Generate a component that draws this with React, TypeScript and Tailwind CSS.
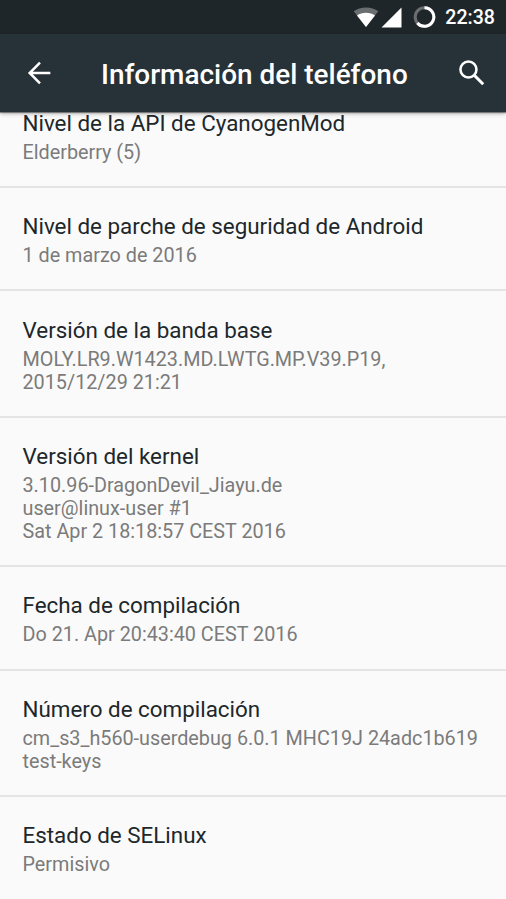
interface InfoItem {
  title: string;
  summary: string[];
}

const items: InfoItem[] = [
  { title: "Nivel de la API de CyanogenMod", summary: ["Elderberry (5)"] },
  {
    title: "Nivel de parche de seguridad de Android",
    summary: ["1 de marzo de 2016"],
  },
  {
    title: "Versión de la banda base",
    summary: ["MOLY.LR9.W1423.MD.LWTG.MP.V39.P19,", "2015/12/29 21:21"],
  },
  {
    title: "Versión del kernel",
    summary: [
      "3.10.96-DragonDevil_Jiayu.de",
      "user@linux-user #1",
      "Sat Apr 2 18:18:57 CEST 2016",
    ],
  },
  {
    title: "Fecha de compilación",
    summary: ["Do 21. Apr 20:43:40 CEST 2016"],
  },
  {
    title: "Número de compilación",
    summary: ["cm_s3_h560-userdebug 6.0.1 MHC19J 24adc1b619", "test-keys"],
  },
  { title: "Estado de SELinux", summary: ["Permisivo"] },
];

function StatusBar() {
  return (
    <div className="flex h-[34px] shrink-0 items-center justify-end bg-[#1f262a] pr-[11px] text-white">
      <svg width="26" height="22" viewBox="0 0 26 22" aria-hidden="true">
        <path d="M13 21 0.7 5.3C4 2.7 8.3 1.4 13 1.4S22 2.7 25.3 5.3Z" fill="#6a6e70" />
        <path d="M13 21 4 9.5C6.5 7.7 9.6 6.7 13 6.7s6.5 1 9 2.8Z" fill="#fff" />
      </svg>
      <svg className="ml-[2px]" width="21" height="22" viewBox="0 0 21 22" aria-hidden="true">
        <path d="M20.5 1.5V21.5H0.5Z" fill="#fff" />
      </svg>
      <svg className="ml-[11px]" width="23" height="23" viewBox="0 0 23 23" aria-hidden="true">
        <circle cx="11.5" cy="11" r="9.3" fill="none" stroke="#6a6e70" strokeWidth="3" />
        <path
          d="M11.5 1.7A9.3 9.3 0 1 1 4.4 17"
          fill="none"
          stroke="#fff"
          strokeWidth="3"
        />
      </svg>
      <span className="mt-px ml-[9px] text-[19.6px] leading-[23px] font-medium">22:38</span>
    </div>
  );
}

function ActionBar() {
  return (
    <header className="relative z-10 flex h-[78px] shrink-0 items-center bg-[#273238] pr-[17px] pl-[22px] text-white shadow-[0_1px_1px_rgba(0,0,0,0.4),0_2px_4px_rgba(0,0,0,0.25)]">
      <button type="button" aria-label="Atrás">
        <svg
          width="34"
          height="34"
          viewBox="0 0 24 24"
          fill="none"
          stroke="currentColor"
          strokeWidth="1.75"
        >
          <path d="M20 12H5.2M12.7 4.7 5.4 12l7.3 7.3" />
        </svg>
      </button>
      <h1 className="mt-[2px] ml-[45px] flex-1 text-[27.95px] leading-[33px] font-medium whitespace-nowrap">
        Información del teléfono
      </h1>
      <button type="button" aria-label="Buscar">
        <svg
          width="34"
          height="34"
          viewBox="0 0 24 24"
          fill="none"
          stroke="currentColor"
        >
          <circle cx="9.5" cy="9.5" r="5.65" strokeWidth="1.8" />
          <path d="M13.7 13.7 19.9 19.9" strokeWidth="2.1" />
        </svg>
      </button>
    </header>
  );
}

function InfoRow({ title, summary }: InfoItem) {
  return (
    <li className="group">
      <div className="px-[22.5px] pt-[25.1px] pb-[22.3px]">
        <h2 className="mb-[4.6px] text-[22.4px] leading-[26.4px] text-[#20272b]">{title}</h2>
        {summary.map((line) => (
          <p key={line} className="text-[19.8px] leading-[23px] whitespace-nowrap text-[#7b7b7b]">
            {line}
          </p>
        ))}
      </div>
      <div className="h-[2px] bg-[#e4e4e4] group-last:hidden" />
    </li>
  );
}

export default function App() {
  return (
    <div className="flex h-[899px] w-full flex-col overflow-hidden bg-[#fafafa] font-[Roboto,sans-serif]">
      <StatusBar />
      <ActionBar />
      <main className="min-h-0 flex-1 overflow-hidden">
        {/* list is scrolled, the first row is partly under the action bar */}
        <ul className="-mt-[27.3px]">
          {items.map((item) => (
            <InfoRow key={item.title} {...item} />
          ))}
        </ul>
      </main>
    </div>
  );
}
